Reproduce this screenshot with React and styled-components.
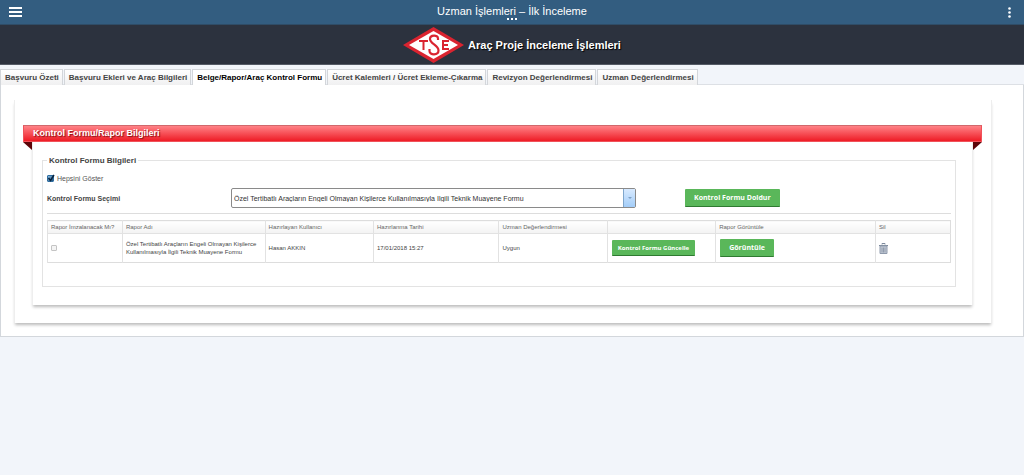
import React, { useState } from "react";
import styled, { createGlobalStyle } from "styled-components";

const GlobalStyle = createGlobalStyle`
  * {
    box-sizing: border-box;
  }
  body {
    margin: 0;
    background: #f2f5fa;
    color: #444;
    font-family: "Liberation Sans", Arial, sans-serif;
  }
  button,
  input {
    font-family: inherit;
  }
`;

const TopBar = styled.header`
  display: grid;
  grid-template-columns: 30px 1fr 30px;
  height: 25px;
  background: #335d80;
  border-bottom: 1px solid #2f4c66;
`;

const TopTitle = styled.div`
  display: flex;
  flex-direction: column;
  align-items: center;
  padding-top: 5px;
  color: #fff;
  font-size: 11px;
  line-height: 13px;
`;

const IconButton = styled.button`
  display: flex;
  align-items: center;
  justify-content: center;
  padding: 0;
  border: 0;
  background: none;
  cursor: pointer;
`;

const Banner = styled.div`
  display: flex;
  align-items: center;
  justify-content: center;
  gap: 4px;
  height: 40px;
  background: #2c323e;
  border-bottom: 1px solid #555b66;
  h1 {
    margin: 0;
    color: #fff;
    font-size: 11px;
    line-height: 14px;
    text-shadow: 1px 1px 1px #000;
  }
`;

const TabList = styled.nav`
  display: flex;
  align-items: flex-end;
  gap: 1px;
  height: 20px;
  border-bottom: 1px solid #dde0e5;
`;

const Tab = styled.button`
  height: 16px;
  margin-bottom: -1px;
  padding: 0 3px 0 4px;
  border: 1px solid #d3d6da;
  border-bottom: 0;
  background: ${({ $active }) => ($active ? "#fff" : "linear-gradient(#fff, #f0f0f1)")};
  color: ${({ $active }) => ($active ? "#000" : "#444")};
  font-size: 8px;
  font-weight: bold;
  line-height: 14px;
  white-space: nowrap;
  cursor: pointer;
`;

const Content = styled.main`
  padding: 15px 31px 13px 13px;
  background: #fff;
  border: 1px solid #d3d7dc;
  border-top: 0;
`;

const OuterPanel = styled.div`
  padding: 25px 9px 18px 8px;
  border: solid #eee;
  border-width: 0 1px;
  box-shadow: 0 3px 3px -1px #bbb;
`;

const Ribbon = styled.h2`
  margin: 0;
  height: 17px;
  padding-left: 9px;
  border: 1px solid #f0525a;
  border-top-color: #d0686c;
  background: linear-gradient(#ff8287, #ee1c25);
  color: #fff;
  font-size: 9px;
  line-height: 14px;
  text-shadow: 1px 1px 1px #8a1015;
`;

const Folds = styled.div`
  display: flex;
  justify-content: space-between;
  height: 8px;
  margin-bottom: -8px;
`;

const Fold = styled.span`
  width: 9px;
  background: #5c0508;
  clip-path: ${({ $side }) =>
    $side === "left" ? "polygon(0 0, 100% 0, 100% 100%)" : "polygon(0 0, 100% 0, 0 100%)"};
`;

const InnerPanel = styled.div`
  margin: 0 9px;
  padding: 14px 16px 18px 9px;
  border: solid #eee;
  border-width: 0 1px;
  box-shadow: 0 3px 3px -1px #bbb;
`;

const Fieldset = styled.fieldset`
  min-width: 0;
  margin: 0;
  padding: 8px 4px 23px;
  border: 1px solid #e3e3e3;
  legend {
    padding: 0 2px;
    font-size: 8px;
    font-weight: bold;
    line-height: 9px;
  }
`;

const CheckLabel = styled.label`
  display: flex;
  align-items: center;
  gap: 3px;
  height: 10px;
  color: #555;
  font-size: 7px;
`;

const Checkbox = styled.input`
  appearance: none;
  display: block;
  width: ${({ $small }) => ($small ? "6px" : "7px")};
  height: ${({ $small }) => ($small ? "6px" : "7px")};
  margin: 0;
  border: 1px solid #c4c4c4;
  border-radius: 1px;
  background: #f4f4f4;
  &:checked {
    border-color: #2f6da0;
    background: linear-gradient(135deg, #8fbfe4, #1c4f7c);
  }
`;

const CheckWrap = styled.span`
  position: relative;
  svg {
    position: absolute;
    top: -1px;
    left: 0;
    pointer-events: none;
  }
`;

const FormRow = styled.div`
  display: grid;
  grid-template-columns: 184px minmax(0, 405px) auto;
  align-items: center;
  justify-content: start;
  margin-bottom: 6px;
  padding: 5px 0;
  border-bottom: 1px solid #ddd;
  > label {
    font-size: 7px;
    font-weight: bold;
  }
  > button {
    margin-left: 49px;
  }
`;

const Combo = styled.div`
  display: flex;
  height: 20px;
  border: 1px solid #8a8a8a;
  border-radius: 2px;
  input {
    flex: 1;
    min-width: 0;
    padding: 0 2px;
    border: 0;
    outline: 0;
    background: none;
    color: #333;
    font-size: 7px;
  }
  button {
    display: flex;
    align-items: center;
    justify-content: center;
    width: 12px;
    padding: 0;
    border: 0;
    border-left: 1px solid #7fa6cc;
    background: linear-gradient(#d8eaff, #a3cdf8);
  }
`;

const GreenButton = styled.button`
  display: block;
  height: ${({ $small }) => ($small ? "16px" : "18px")};
  padding: 0 ${({ $small }) => ($small ? "6px" : "9px")};
  border: 0;
  border-bottom: 1px solid #2f7a31;
  border-radius: 1px;
  background: #5ab75a;
  color: #fff;
  font-family: "Open Sans", sans-serif;
  font-size: ${({ $small }) => ($small ? "6px" : "7px")};
  font-weight: bold;
  white-space: nowrap;
  cursor: pointer;
`;

const Table = styled.table`
  width: 100%;
  table-layout: fixed;
  border-collapse: collapse;
  border: 1px solid #ddd;
  font-size: 6px;
  line-height: 8px;
  th,
  td {
    padding: 0 3px;
    border-left: 1px solid #e2e2e2;
    color: #666;
    font-weight: normal;
    text-align: left;
    white-space: nowrap;
  }
  th {
    height: 13px;
    background: linear-gradient(#fff, #f3f3f3);
    border-bottom: 1px solid #e2e2e2;
  }
  td {
    height: 29px;
    color: #444;
  }
  ${GreenButton} {
    margin-left: 1px;
  }
`;

const columns = [
  { title: "Rapor İmzalanacak Mı?", width: "8.3%" },
  { title: "Rapor Adı", width: "15.8%" },
  { title: "Hazırlayan Kullanıcı", width: "12%" },
  { title: "Hazırlanma Tarihi", width: "13.9%" },
  { title: "Uzman Değerlendirmesi", width: "12%" },
  { title: "", width: "12%" },
  { title: "Rapor Görüntüle", width: "17.7%" },
  { title: "Sil", width: "8.3%" },
];

const tabs = [
  "Başvuru Özeti",
  "Başvuru Ekleri ve Araç Bilgileri",
  "Belge/Rapor/Araç Kontrol Formu",
  "Ücret Kalemleri / Ücret Ekleme-Çıkarma",
  "Revizyon Değerlendirmesi",
  "Uzman Değerlendirmesi",
];

function Logo() {
  return (
    <svg width="61" height="36" viewBox="0 0 61 36" fill="none" aria-label="TSE">
      <path d="M30.500 0L61 18 30.500 36 0 18z" fill="#da2430" />
      <path d="M30.500 4L55 18 30.500 32 6 18z" fill="#fff" />
      <path d="M16 14h9M20.500 14v9M46 14h-6v8h6M40 18h5" stroke="#da2430" strokeWidth="2" />
      <path
        d="M35 13V11.500C35 7.500 27 7.500 27 12c0 5 8.500 6 8.500 11.500 0 5-9 5-9 .5V22"
        stroke="#da2430"
        strokeWidth="2.200"
      />
    </svg>
  );
}

function TrashIcon() {
  return (
    <svg width="9" height="11" viewBox="0 0 9 11" fill="none">
      <path d="M3 1.500V.5h3v1M0 2.500h9" stroke="#7d899c" />
      <path d="M1 3h7v7.500H1z" fill="#c3cad6" stroke="#8f9aac" />
      <path d="M3 4.500v5M4.500 4.500v5M6 4.500v5" stroke="#7d899c" strokeWidth=".7" />
    </svg>
  );
}

function App() {
  const [active, setActive] = useState(2);
  const [showAll, setShowAll] = useState(true);
  const [form, setForm] = useState(
    "Özel Tertibatlı Araçların Engeli Olmayan Kişilerce Kullanılmasıyla İlgili Teknik Muayene Formu"
  );

  return (
    <>
      <GlobalStyle />
      <TopBar>
        <IconButton aria-label="Menü">
          <svg width="13" height="10" viewBox="0 0 13 10">
            <path d="M0 1h13M0 5h13M0 9h13" stroke="#fff" strokeWidth="2" />
          </svg>
        </IconButton>
        <TopTitle>
          Uzman İşlemleri – İlk İnceleme
          <svg width="10" height="2" viewBox="0 0 10 2" fill="#fff">
            <path d="M0 0h2v2H0zM4 0h2v2H4zM8 0h2v2H8z" />
          </svg>
        </TopTitle>
        <IconButton aria-label="Seçenekler">
          <svg width="3" height="11" viewBox="0 0 3 11" fill="#fff">
            <circle cx="1.500" cy="1.500" r="1.300" />
            <circle cx="1.500" cy="5.500" r="1.300" />
            <circle cx="1.500" cy="9.500" r="1.300" />
          </svg>
        </IconButton>
      </TopBar>
      <Banner>
        <Logo />
        <h1>Araç Proje İnceleme İşlemleri</h1>
      </Banner>
      <TabList>
        {tabs.map((tab, i) => (
          <Tab key={tab} $active={i === active} onClick={() => setActive(i)}>
            {tab}
          </Tab>
        ))}
      </TabList>
      <Content>
        <OuterPanel>
          <Ribbon>Kontrol Formu/Rapor Bilgileri</Ribbon>
          <Folds>
            <Fold $side="left" />
            <Fold $side="right" />
          </Folds>
          <InnerPanel>
            <Fieldset>
              <legend>Kontrol Formu Bilgileri</legend>
              <CheckLabel>
                <CheckWrap>
                  <Checkbox
                    type="checkbox"
                    checked={showAll}
                    onChange={(e) => setShowAll(e.target.checked)}
                  />
                  {showAll && (
                    <svg width="8" height="8" viewBox="0 0 8 8" fill="none">
                      <path d="M1.500 4l2 2.500L7 1" stroke="#06233f" strokeWidth="1.500" />
                    </svg>
                  )}
                </CheckWrap>
                Hepsini Göster
              </CheckLabel>
              <FormRow>
                <label htmlFor="form">Kontrol Formu Seçimi</label>
                <Combo>
                  <input id="form" value={form} onChange={(e) => setForm(e.target.value)} />
                  <button aria-label="Listeyi aç">
                    <svg width="4" height="2" viewBox="0 0 4 2">
                      <path d="M0 0h4L2 2z" fill="#7fa0c4" />
                    </svg>
                  </button>
                </Combo>
                <GreenButton>Kontrol Formu Doldur</GreenButton>
              </FormRow>
              <Table>
                <colgroup>
                  {columns.map((col, i) => (
                    <col key={i} style={{ width: col.width }} />
                  ))}
                </colgroup>
                <thead>
                  <tr>
                    {columns.map((col, i) => (
                      <th key={i}>{col.title}</th>
                    ))}
                  </tr>
                </thead>
                <tbody>
                  <tr>
                    <td>
                      <Checkbox type="checkbox" $small aria-label="Rapor İmzalanacak Mı?" />
                    </td>
                    <td>
                      Özel Tertibatlı Araçların Engeli Olmayan Kişilerce
                      <br />
                      Kullanılmasıyla İlgili Teknik Muayene Formu
                    </td>
                    <td>Hasan AKKIN</td>
                    <td>17/01/2018 15:27</td>
                    <td>Uygun</td>
                    <td>
                      <GreenButton $small>Kontrol Formu Güncelle</GreenButton>
                    </td>
                    <td>
                      <GreenButton>Görüntüle</GreenButton>
                    </td>
                    <td>
                      <IconButton aria-label="Sil">
                        <TrashIcon />
                      </IconButton>
                    </td>
                  </tr>
                </tbody>
              </Table>
            </Fieldset>
          </InnerPanel>
        </OuterPanel>
      </Content>
    </>
  );
}

export default App;
